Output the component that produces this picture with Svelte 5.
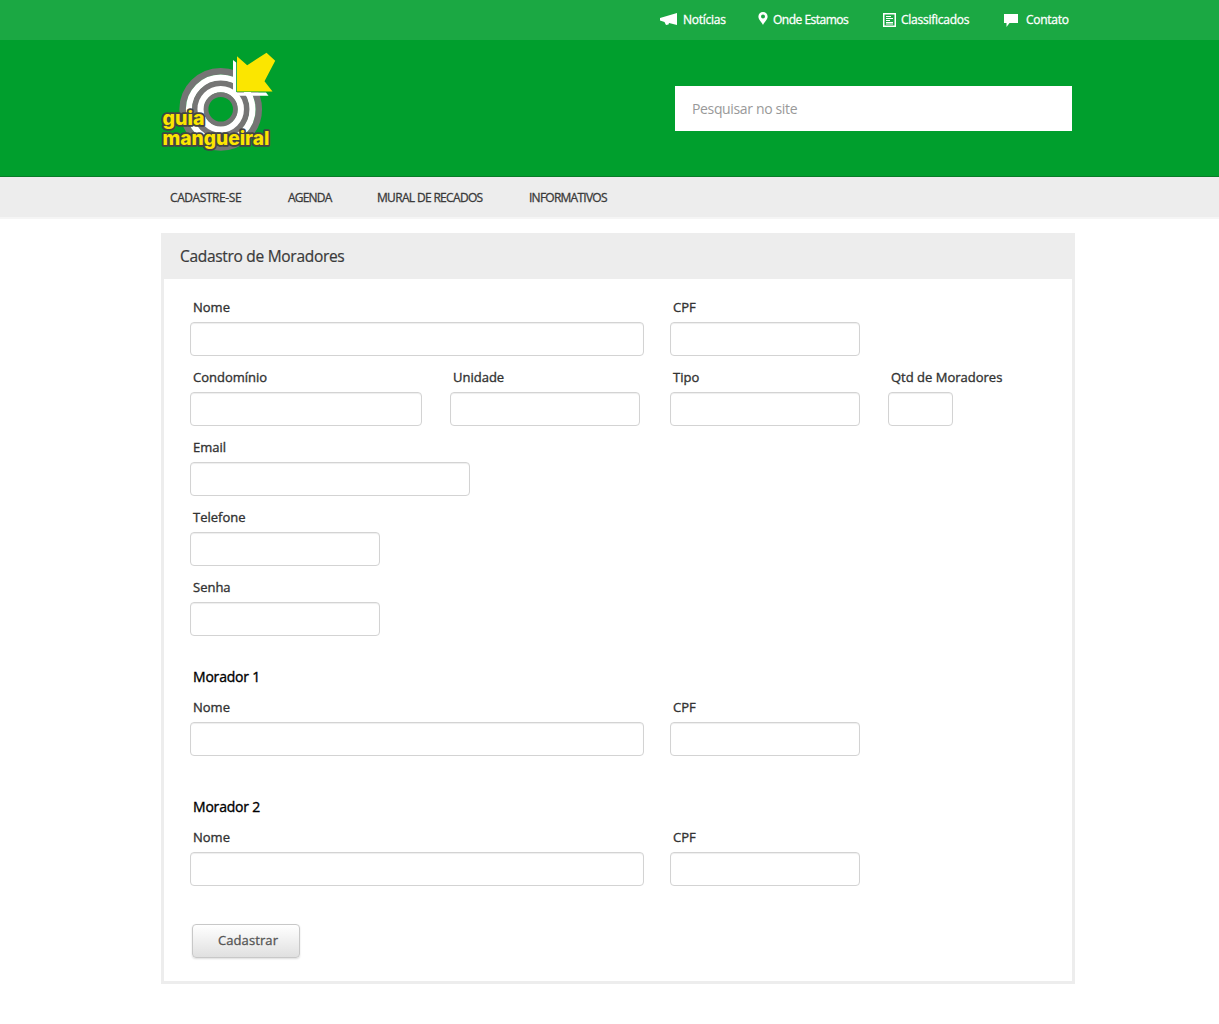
<script>
  const rows = [
    [['Nome', 'w454'], ['CPF', 'w190 c670']],
    [['Condomínio', 'w232'], ['Unidade', 'w190 c450'], ['Tipo', 'w190 c640'], ['Qtd de Moradores', 'w65 c888']],
    [['Email', 'w280']],
    [['Telefone', 'w190']],
    [['Senha', 'w190']],
  ];
  const people = ['Morador 1', 'Morador 2'];
</script>

{#snippet field(label, cls)}
  <label class="field {cls}"><span>{label}</span><input type="text" /></label>
{/snippet}

<header>
  <div class="top">
    <a class="t1" href="#n"><svg width="17" height="13" viewBox="0 0 17 13"><path fill="#fff" d="M17 0v12l-8-2-.5 1.500-2.500.5-1.500-3L0 7.500V5z" /></svg><span>Notícias</span></a>
    <a class="t2" href="#o"><svg width="10" height="13" viewBox="0 0 10 13"><path fill="#fff" fill-rule="evenodd" d="M5 0a4.600 4.600 0 0 1 4.600 4.600C9.600 8 6.500 10 5 13 3.500 10 .4 8 .4 4.600A4.600 4.600 0 0 1 5 0zm0 2.600a2 2 0 1 0 0 4 2 2 0 0 0 0-4z" /></svg><span>Onde Estamos</span></a>
    <a class="t3" href="#c"><svg width="13" height="14" viewBox="0 0 13 14"><path fill="none" stroke="#fff" stroke-width="1.500" d="M.75.75h11.500v12.500H.75z" /><path fill="none" stroke="#fff" d="M3 3.500h5M3 5.500h7M3 7.500h4M3 9.500h7M3 11h7" /></svg><span>Classificados</span></a>
    <a class="t4" href="#k"><svg width="14" height="13" viewBox="0 0 14 13"><path fill="#fff" d="M0 0h14v9H5.500L2.500 13V9H0z" /></svg><span>Contato</span></a>
  </div>
  <div class="brand">
    <svg class="logo" width="140" height="115" viewBox="0 0 140 115">
      <g fill="none" stroke-width="6.500">
        <circle cx="70.700" cy="64.300" r="38.100" stroke="#757575" />
        <circle cx="70.700" cy="64.300" r="31.600" stroke="#fff" />
        <circle cx="70.700" cy="64.300" r="25.500" stroke="#757575" />
        <circle cx="70.700" cy="64.300" r="20" stroke="#fff" />
        <circle cx="70.700" cy="64.300" r="14.700" stroke="#757575" stroke-width="4.800" />
      </g>
      <path fill="#009f2d" d="M86 13h36v34H86z" />
      <path fill="#fff" d="M83 15l3.200 2.500v30H116l2.500 3.300H83z" />
      <path fill="#fbe600" d="M87 11.300l10.200 8.900L116.500 7.700l8.700 8-10.700 20.500 8 10.300H87z" />
      <g class="word"><text x="12.500" y="80" textLength="42" lengthAdjust="spacingAndGlyphs">guia</text><text x="12.500" y="100" textLength="107" lengthAdjust="spacingAndGlyphs">mangueiral</text></g>
    </svg>
    <input class="search" placeholder="Pesquisar no site" />
  </div>
  <nav>
    <a class="n1" href="#1">CADASTRE-SE</a><a class="n2" href="#2">AGENDA</a><a class="n3" href="#3">MURAL DE RECADOS</a><a class="n4" href="#4">INFORMATIVOS</a>
  </nav>
</header>
<main>
  <h1><span>Cadastro de Moradores</span></h1>
  <form>
    {#each rows as row}
      <div class="row">{#each row as [label, cls]}{@render field(label, cls)}{/each}</div>
    {/each}
    {#each people as person}
      <h2><span>{person}</span></h2>
      <div class="row">{@render field('Nome', 'w454')}{@render field('CPF', 'w190 c670')}</div>
    {/each}
    <button type="button"><span>Cadastrar</span></button>
  </form>
</main>

<style>
  :global(body) { background: #fff; font-family: "Trebuchet MS", "Open Sans", sans-serif; }
  .top { height: 40px; background: #1ba843; display: flex; padding-left: 660px; }
  .top a { display: flex; align-items: center; color: #fff; font-size: 12px; -webkit-text-stroke: .3px; text-decoration: none; white-space: nowrap; }
  .top svg { margin-top: -1px; }
  .top span { margin-top: -1px; }
  .t1 { width: 98px; gap: 6px; letter-spacing: -.25px; }
  .t2 { width: 125px; gap: 5px; letter-spacing: -.5px; }
  .t2 svg { position: relative; top: -1px; }
  .t3 { width: 121px; gap: 5px; letter-spacing: -.25px; }
  .t4 { gap: 8px; letter-spacing: -.28px; }
  .t4 svg { margin-top: 1px; }
  .brand { box-sizing: border-box; height: 137px; background: #009f2d; border-bottom: 1px solid #087c28; display: flex; padding: 5px 0 0 150px; }
  .word { font: 800 19px Inter, sans-serif; fill: #fbe600; stroke: #444; stroke-width: 3.5px; paint-order: stroke; stroke-linejoin: round; }
  .search { box-sizing: border-box; width: 397px; height: 45px; margin: 41px 0 0 385px; border: 0; padding: 0 17px 1px; font: 14px "Open Sans", sans-serif; letter-spacing: -.35px; color: #555; }
  .search::placeholder { color: #999; opacity: 1; }
  nav { height: 40px; background: #ededed; border-bottom: 2px solid #f5f5f5; display: flex; padding-left: 170px; line-height: 42px; font-size: 12px; -webkit-text-stroke: .3px; }
  nav a { color: #3a3a3a; text-decoration: none; white-space: nowrap; }
  .n1 { width: 118px; letter-spacing: -.42px; }
  .n2 { width: 89px; letter-spacing: -.8px; }
  .n3 { width: 152px; letter-spacing: -.67px; }
  .n4 { letter-spacing: -.75px; }
  main { box-sizing: border-box; width: 914px; height: 751px; margin: 14px 0 40px 161px; border: 3px solid #ededed; }
  h1 { margin: 0; height: 43px; background: #ededed; padding-left: 16px; font-size: 15.5px; font-weight: 400; -webkit-text-stroke: .2px; letter-spacing: -.3px; line-height: 40px; color: #3a3a3a; }
  form { padding: 13px 0 0 26px; }
  .row { display: flex; height: 64px; margin-bottom: 6px; }
  .field span { display: block; height: 30px; line-height: 30px; padding-left: 3px; font-size: 13px; -webkit-text-stroke: .35px; color: #333; white-space: nowrap; }
  .field input { box-sizing: border-box; display: block; width: 100%; height: 34px; border: 1px solid #d3d3d3; border-radius: 4px; background: #fff; box-shadow: inset 0 1px 1px #eee; }
  .w454 { width: 454px; }
  .w232 { width: 232px; }
  .w280 { width: 280px; }
  .w190 { width: 190px; }
  .w65 { width: 65px; }
  .c670 { margin-left: 26px; }
  .c450, .c888 { margin-left: 28px; }
  .c640 { margin-left: 30px; }
  h2 { margin: 26px 0 0; height: 30px; line-height: 30px; padding-left: 3px; font-size: 14px; font-weight: 400; -webkit-text-stroke: .35px; letter-spacing: -.2px; color: #000; }
  h2 ~ h2 { margin-top: 36px; }
  button { display: block; width: 108px; height: 34px; margin: 38px 0 0 2px; padding: 0 0 2px 4px; border: 1px solid #c8c8c8; border-radius: 4px; background: linear-gradient(#fff, #e0e0e0); box-shadow: 0 1px 2px #ddd; font: 13px "Open Sans", sans-serif; letter-spacing: .1px; -webkit-text-stroke: .3px; color: #555; }
</style>
